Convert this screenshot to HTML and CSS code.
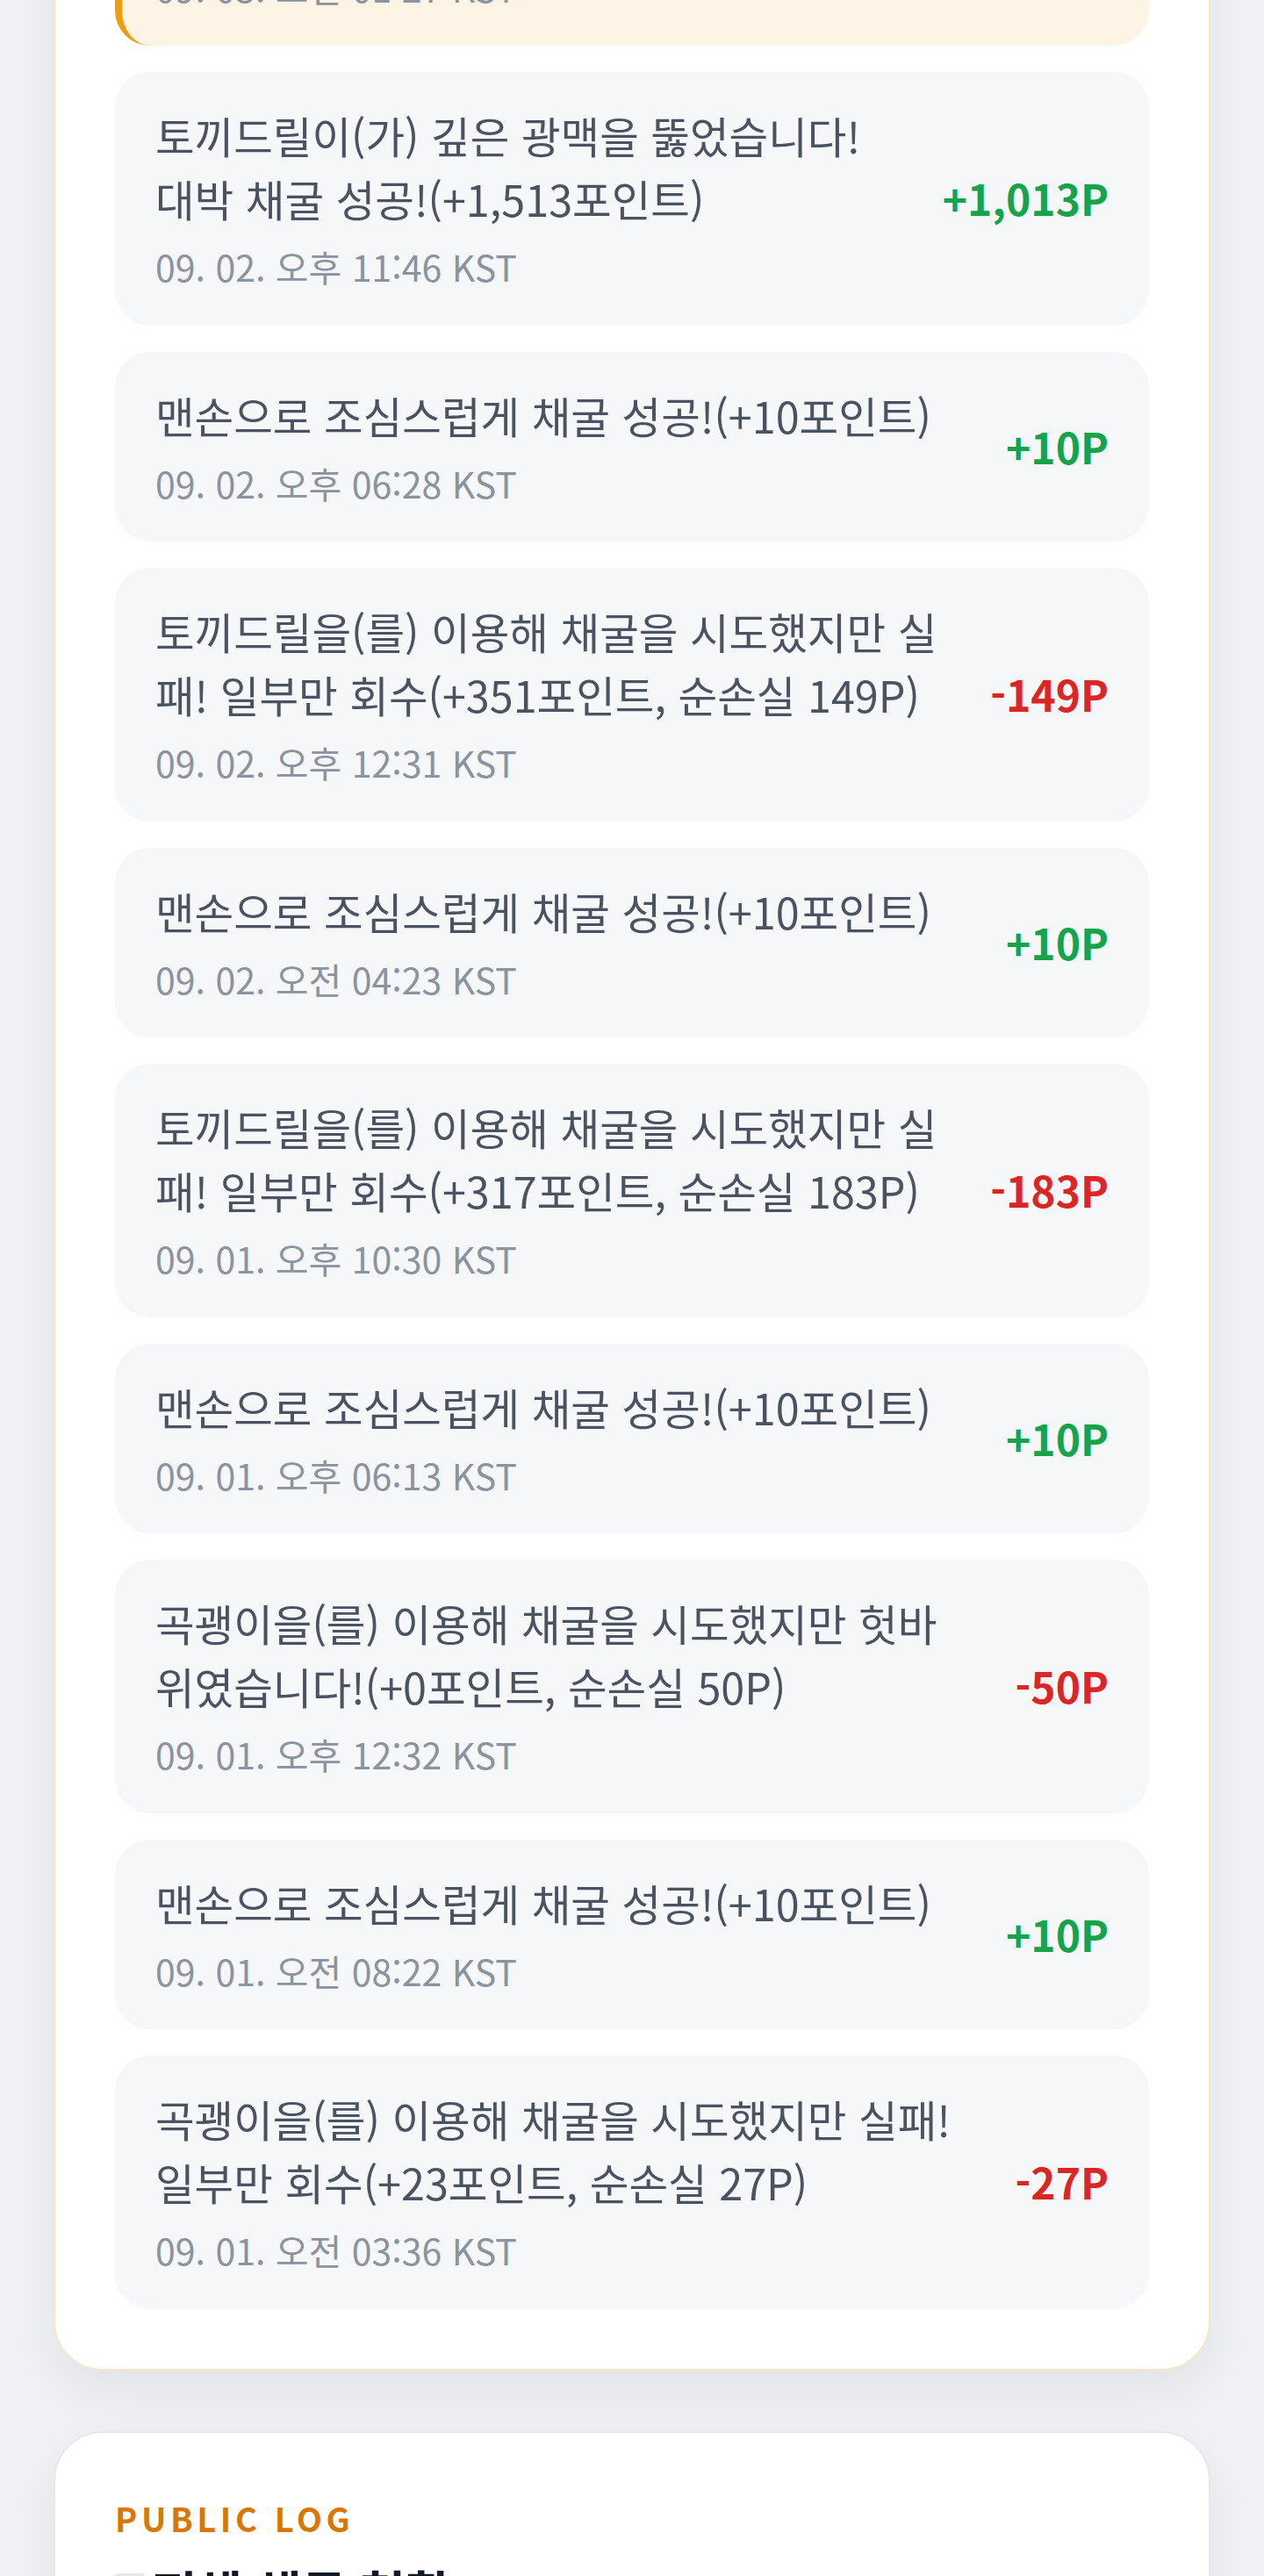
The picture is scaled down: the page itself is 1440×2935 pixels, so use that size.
FILE: index.html
```html
<!DOCTYPE html>
<html lang="ko">
<head>
<meta charset="utf-8">
<title>채굴 기록</title>
<link rel="stylesheet" href="styles.css">
</head>
<body>
<main class="page">
  <section class="card card-mine">
    <div class="notice">
      <div class="entry-text">
        <p class="entry-title">맨손으로 조심스럽게 채굴 성공!(+10포인트)</p>
        <p class="entry-meta">09. 03. 오전 01:27 KST</p>
      </div>
    </div>

    <ul class="entries">
      <li class="entry">
        <div class="entry-text">
          <p class="entry-title">토끼드릴이(가) 깊은 광맥을 뚫었습니다! 대박 채굴 성공!(+1,513포인트)</p>
          <p class="entry-meta">09. 02. 오후 11:46 KST</p>
        </div>
        <span class="amount gain">+1,013P</span>
      </li>
      <li class="entry">
        <div class="entry-text">
          <p class="entry-title">맨손으로 조심스럽게 채굴 성공!(+10포인트)</p>
          <p class="entry-meta">09. 02. 오후 06:28 KST</p>
        </div>
        <span class="amount gain">+10P</span>
      </li>
      <li class="entry">
        <div class="entry-text">
          <p class="entry-title">토끼드릴을(를) 이용해 채굴을 시도했지만 실패! 일부만 회수(+351포인트, 순손실 149P)</p>
          <p class="entry-meta">09. 02. 오후 12:31 KST</p>
        </div>
        <span class="amount loss">-149P</span>
      </li>
      <li class="entry">
        <div class="entry-text">
          <p class="entry-title">맨손으로 조심스럽게 채굴 성공!(+10포인트)</p>
          <p class="entry-meta">09. 02. 오전 04:23 KST</p>
        </div>
        <span class="amount gain">+10P</span>
      </li>
      <li class="entry">
        <div class="entry-text">
          <p class="entry-title">토끼드릴을(를) 이용해 채굴을 시도했지만 실패! 일부만 회수(+317포인트, 순손실 183P)</p>
          <p class="entry-meta">09. 01. 오후 10:30 KST</p>
        </div>
        <span class="amount loss">-183P</span>
      </li>
      <li class="entry">
        <div class="entry-text">
          <p class="entry-title">맨손으로 조심스럽게 채굴 성공!(+10포인트)</p>
          <p class="entry-meta">09. 01. 오후 06:13 KST</p>
        </div>
        <span class="amount gain">+10P</span>
      </li>
      <li class="entry">
        <div class="entry-text">
          <p class="entry-title">곡괭이을(를) 이용해 채굴을 시도했지만 헛바위였습니다!(+0포인트, 순손실 50P)</p>
          <p class="entry-meta">09. 01. 오후 12:32 KST</p>
        </div>
        <span class="amount loss">-50P</span>
      </li>
      <li class="entry">
        <div class="entry-text">
          <p class="entry-title">맨손으로 조심스럽게 채굴 성공!(+10포인트)</p>
          <p class="entry-meta">09. 01. 오전 08:22 KST</p>
        </div>
        <span class="amount gain">+10P</span>
      </li>
      <li class="entry">
        <div class="entry-text">
          <p class="entry-title">곡괭이을(를) 이용해 채굴을 시도했지만 실패! 일부만 회수(+23포인트, 순손실 27P)</p>
          <p class="entry-meta">09. 01. 오전 03:36 KST</p>
        </div>
        <span class="amount loss">-27P</span>
      </li>
    </ul>
  </section>

  <section class="card card-public">
    <p class="eyebrow">PUBLIC LOG</p>
    <h2 class="section-title"><span class="title-icon"></span>전체 채굴 현황</h2>
  </section>
</main>
</body>
</html>
```

FILE: styles.css
```css
* {
  box-sizing: border-box;
}

html,
body {
  margin: 0;
  padding: 0;
}

body {
  background: #f1f2f5;
  font-family: "Noto Sans CJK KR", "Noto Sans", sans-serif;
  color: #4b5262;
  overflow: hidden;
}

.page {
  padding: 0 61px 200px;
}

.card {
  background: #ffffff;
  border-radius: 56px;
  padding: 68px;
  box-shadow: 0 24px 60px rgba(17, 24, 39, 0.07);
}

.card-mine {
  margin-top: -234px;
  border: 2px solid #f6e7c7;
  display: flex;
  flex-direction: column;
  gap: 30px;
}

.card-public {
  margin-top: 69px;
  border: 2px solid #e6e8ec;
}

.notice {
  background: #fef4e5;
  border-left: 8px solid #f39c0b;
  border-radius: 40px;
  padding: 36px 46px 38px 38px;
}

.entries {
  list-style: none;
  margin: 0;
  padding: 0;
  display: flex;
  flex-direction: column;
  gap: 30px;
}

.entry {
  background: #f6f7f9;
  border-radius: 40px;
  padding: 36px 46px 38.5px;
  display: flex;
  align-items: center;
  gap: 50px;
}

.entry-text {
  flex: 1;
  min-width: 0;
}

.entry-title {
  margin: 0;
  font-size: 48.5px;
  line-height: 72px;
  color: #4b5262;
}

.entry-meta {
  margin: 12px 0 0;
  font-size: 41px;
  line-height: 58px;
  color: #8b92a0;
}

.amount {
  flex: none;
  font-size: 48px;
  line-height: 1;
  font-weight: 700;
  white-space: nowrap;
}

.gain {
  color: #16a34a;
}

.loss {
  color: #dc2626;
}

.eyebrow {
  margin: 0;
  padding-top: 6px;
  font-size: 38px;
  line-height: 46px;
  font-weight: 700;
  letter-spacing: 0.12em;
  color: #d97706;
}

.section-title {
  margin: 24px 0 0;
  display: flex;
  align-items: center;
  gap: 8px;
  font-size: 56px;
  line-height: 72px;
  font-weight: 700;
  color: #111827;
}

.title-icon {
  width: 34px;
  height: 40px;
  border-radius: 4px;
  background: #e5e7eb;
}
```
